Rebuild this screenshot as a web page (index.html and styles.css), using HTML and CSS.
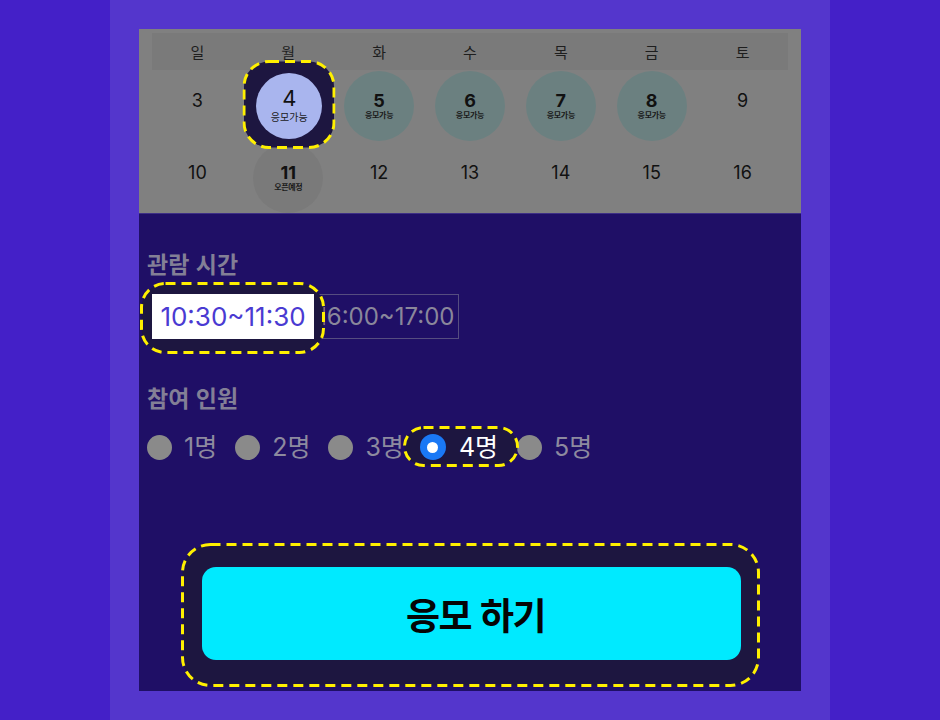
FILE: index.html
```html
<!DOCTYPE html>
<html lang="ko">
<head>
<meta charset="utf-8">
<title>응모</title>
<link rel="stylesheet" href="styles.css">
</head>
<body>
<div class="frame">
  <div class="panel">
    <section class="calendar">
      <div class="weekdays">
        <span>일</span><span>월</span><span>화</span><span>수</span><span>목</span><span>금</span><span>토</span>
      </div>
      <div class="week">
        <div class="cell"><div class="circle"><div class="num">3</div><div class="lbl"></div></div></div>
        <div class="cell spot-day">
          <svg class="hl hl-day" width="93" height="89" viewBox="0 0 93 89"><rect x="1.5" y="1.5" width="90" height="86" rx="25" fill="#1D1640" stroke="#FFF000" stroke-width="3" stroke-dasharray="10 6"/></svg>
          <div class="circle sel"><div class="num big">4</div><div class="lbl lg">응모가능</div></div>
        </div>
        <div class="cell"><div class="circle open"><div class="num b">5</div><div class="lbl">응모가능</div></div></div>
        <div class="cell"><div class="circle open"><div class="num b">6</div><div class="lbl">응모가능</div></div></div>
        <div class="cell"><div class="circle open"><div class="num b">7</div><div class="lbl">응모가능</div></div></div>
        <div class="cell"><div class="circle open"><div class="num b">8</div><div class="lbl">응모가능</div></div></div>
        <div class="cell"><div class="circle"><div class="num">9</div><div class="lbl"></div></div></div>
      </div>
      <div class="week last">
        <div class="cell"><div class="circle"><div class="num">10</div><div class="lbl"></div></div></div>
        <div class="cell"><div class="circle soon"><div class="num b">11</div><div class="lbl">오픈예정</div></div></div>
        <div class="cell"><div class="circle"><div class="num">12</div><div class="lbl"></div></div></div>
        <div class="cell"><div class="circle"><div class="num">13</div><div class="lbl"></div></div></div>
        <div class="cell"><div class="circle"><div class="num">14</div><div class="lbl"></div></div></div>
        <div class="cell"><div class="circle"><div class="num">15</div><div class="lbl"></div></div></div>
        <div class="cell"><div class="circle"><div class="num">16</div><div class="lbl"></div></div></div>
      </div>
    </section>

    <section class="form">
      <h2 class="title">관람 시간</h2>
      <div class="times">
        <div class="spot">
          <svg class="hl hl-time" width="185" height="72" viewBox="0 0 185 72"><rect x="1.5" y="1.5" width="182" height="69" rx="24" fill="#1D1640" stroke="#FFF000" stroke-width="3" stroke-dasharray="10 6"/></svg>
          <button class="time active">10:30~11:30</button>
        </div>
        <button class="time other">16:00~17:00</button>
      </div>

      <h2 class="title second">참여 인원</h2>
      <div class="people">
        <div class="opt"><span class="radio"></span><span class="opt-label">1명</span></div>
        <div class="opt"><span class="radio"></span><span class="opt-label">2명</span></div>
        <div class="opt"><span class="radio"></span><span class="opt-label">3명</span></div>
        <div class="opt spot picked">
          <svg class="hl hl-radio" width="116" height="41" viewBox="0 0 116 41"><rect x="1.5" y="1.5" width="113" height="38" rx="19" fill="#1D1640" stroke="#FFF000" stroke-width="3" stroke-dasharray="10 6"/></svg>
          <span class="radio on"></span><span class="opt-label">4명</span>
        </div>
        <div class="opt"><span class="radio"></span><span class="opt-label">5명</span></div>
      </div>

      <div class="submit-wrap">
        <div class="spot">
          <svg class="hl hl-submit" width="579" height="144" viewBox="0 0 579 144"><rect x="1.5" y="1.5" width="576" height="141" rx="28" fill="#1D1640" stroke="#FFF000" stroke-width="3" stroke-dasharray="10 6"/></svg>
          <button class="submit">응모 하기</button>
        </div>
      </div>
    </section>
  </div>
</div>
</body>
</html>
```
FILE: styles.css
```css
* { box-sizing: border-box; }
html, body { margin: 0; padding: 0; }
body {
  background: #4420C8;
  font-family: Inter, "Noto Sans CJK KR", sans-serif;
}
.frame {
  width: 720px;
  height: 720px;
  margin: 0 auto;
  background: #5436CC;
  padding: 29px 29px 0;
}
.panel {
  height: 662px;
  background: #1F0F66;
  display: flex;
  flex-direction: column;
}

/* calendar */
.calendar {
  background: #808080;
  padding: 4px 13px 0;
  border-bottom: 1px solid #3E2F86;
}
.weekdays {
  display: grid;
  grid-template-columns: repeat(7, 1fr);
  height: 37px;
  background: #7A7A7A;
  align-items: center;
}
.weekdays span {
  text-align: center;
  font-family: "Noto Sans CJK KR", sans-serif;
  font-size: 15px;
  color: #1E1E1E;
  line-height: 20px;
}
.week {
  display: grid;
  grid-template-columns: repeat(7, 1fr);
  height: 72px;
}
.week.last { height: 71px; }
.cell {
  display: flex;
  align-items: center;
  justify-content: center;
}
.circle {
  width: 70px;
  height: 70px;
  border-radius: 50%;
  display: flex;
  flex-direction: column;
  align-items: center;
  justify-content: center;
  color: #111;
}
.circle.open { background: #6B8080; }
.circle.soon { background: #7A7A7A; }
.circle.sel {
  width: 66px;
  height: 66px;
  background: #A9B5EE;
  margin: -1px 0 0 2px;
}
.num {
  font-size: 18px;
  line-height: 18px;
  height: 18px;
}
.num.b { font-weight: 700; }
.num.big { font-size: 22px; line-height: 21px; height: 21px; }
.lbl {
  height: 10px;
  font-family: "Noto Sans CJK KR", sans-serif;
  font-size: 8px;
  line-height: 10px;
  font-weight: 700;
  letter-spacing: -0.3px;
  color: #1a1a1a;
}
.lbl.lg {
  height: 13px;
  font-size: 10px;
  line-height: 13px;
  font-weight: 400;
  letter-spacing: 0;
  margin-top: 1px;
}

/* highlights */
.spot-day, .spot {
  position: relative;
  z-index: 1;
}
.hl {
  position: absolute;
  z-index: -1;
  display: block;
}
.hl-day {
  left: 50%;
  top: 50%;
  transform: translate(calc(-50% + 1px), calc(-50% - 1.5px));
}
.hl-time { left: -12px; top: -12px; }
.hl-radio { left: -17px; top: -6px; }
.hl-submit { left: -21px; top: -24px; }

/* form */
.form {
  flex: 1;
  display: flex;
  flex-direction: column;
  padding: 34px 0 31px 8px;
}
.title {
  margin: 0;
  font-family: "Noto Sans CJK KR", sans-serif;
  font-size: 23px;
  line-height: 30px;
  font-weight: 700;
  color: #837F96;
}
.title.second { margin-top: 43px; }
.times {
  display: flex;
  margin: 16px 0 0 5px;
}
.time {
  margin: 0;
  height: 45px;
  border: 0;
  padding: 0;
  font-family: Inter, "Noto Sans CJK KR", sans-serif;
  font-size: 26px;
  background: transparent;
  display: flex;
  align-items: center;
  justify-content: center;
}
.time.active {
  width: 162px;
  background: #FFFFFF;
  color: #4A3AD2;
}
.time.other {
  width: 145px;
  font-size: 24px;
  justify-content: flex-start;
  padding-left: 2px;
  border: 1px solid #564D80;
  color: #8A879B;
}
.people {
  display: flex;
  align-items: center;
  height: 30px;
  margin-top: 20px;
}
.opt {
  display: flex;
  align-items: center;
  height: 30px;
  margin-right: 18px;
}
.radio {
  width: 25px;
  height: 25px;
  border-radius: 50%;
  background: #8A8A8A;
  margin-right: 12px;
}
.radio.on {
  width: 26px;
  height: 26px;
  background: #1A78F5;
  display: flex;
  align-items: center;
  justify-content: center;
  margin-right: 13px;
}
.radio.on::after {
  content: "";
  width: 11px;
  height: 11px;
  border-radius: 50%;
  background: #FFFFFF;
}
.opt-label {
  font-size: 25px;
  line-height: 30px;
  color: #8D8A9F;
}
.picked { margin-left: -2px; margin-right: 19px; }
.picked .opt-label { color: #FFFFFF; }
.submit-wrap {
  margin-top: auto;
  display: flex;
  justify-content: center;
  padding-left: 3px;
  margin-left: -8px;
}
.submit {
  display: block;
  width: 539px;
  height: 93px;
  border: 0;
  border-radius: 14px;
  padding: 0 0 0 8px;
  background: #00EAFF;
  color: #050505;
  font-family: "Noto Sans CJK KR", sans-serif;
  font-size: 37px;
  font-weight: 700;
  letter-spacing: -1.5px;
}
```
